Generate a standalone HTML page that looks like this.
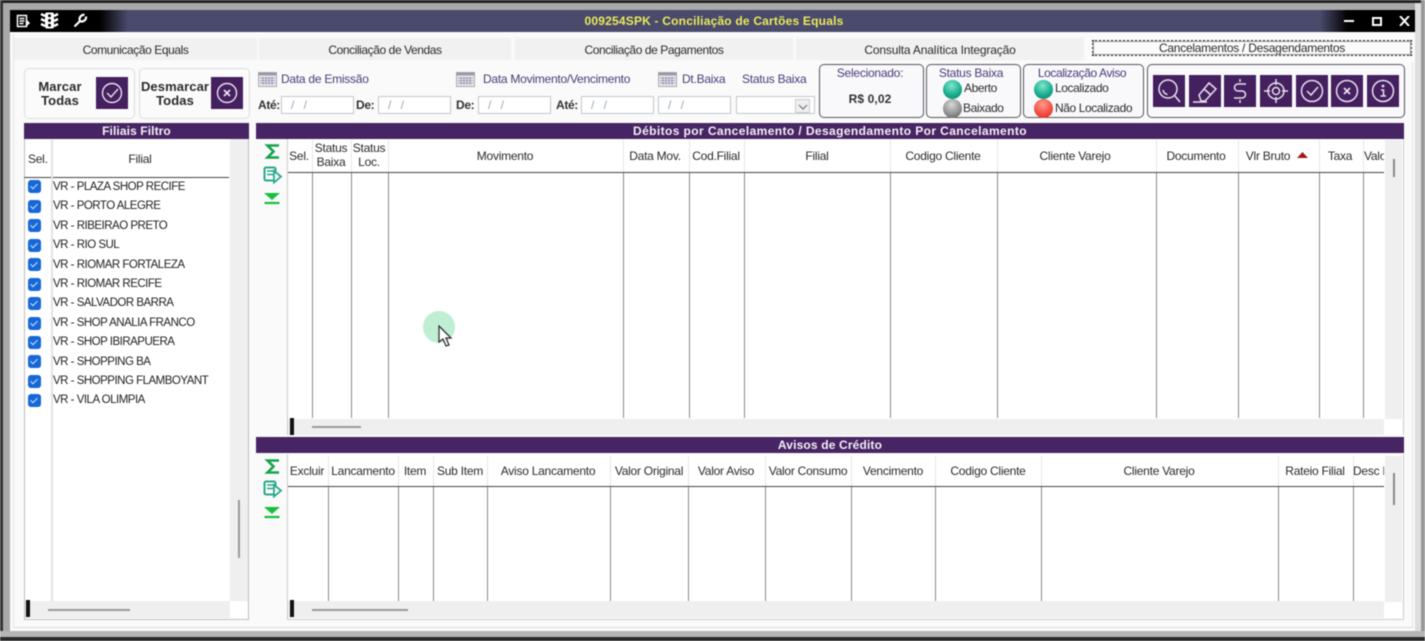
<!DOCTYPE html>
<html lang="pt"><head><meta charset="utf-8"><title>Conciliação de Cartões Equals</title>
<style>
html,body{margin:0;padding:0;background:#f7f7f7}
body{width:1425px;height:641px;overflow:hidden;position:relative;font-family:"Liberation Sans",sans-serif;font-size:12px;letter-spacing:-.25px;color:#2b2b2b;filter:blur(.45px)}
div,span,svg{position:absolute}
.t{white-space:nowrap;text-align:center;transform:translateX(-50%);line-height:14px}
.l{white-space:nowrap;line-height:14px}
.p{color:#4b3a78}
.tab{top:38px;height:22px;background:#f1f1f1;line-height:25px;text-align:center;font-size:12px;letter-spacing:-.42px;color:#2b2b2b}
.bar{background:#472463;color:#f4f0f6;font-weight:bold;text-align:center;height:16px;line-height:16px;font-size:12px;letter-spacing:.1px}
.box{border:1px solid #55555f;border-radius:5px;background:#f9f9fb;box-sizing:border-box}
.btn{border:1px solid #ddd;border-radius:5px;background:#fbfbfb;box-sizing:border-box}
.inp{top:96px;height:18px;width:73px;box-sizing:border-box;border:1px solid #c3c7cc;background:#fff;color:#9aa6b4;font-size:12px;line-height:16px;padding-left:9px;letter-spacing:3px}
.v{width:1px;background:#8a8a8a}
.hl{width:1px;background:#e6e6e6}
.ico{width:32px;height:32px;top:75px;background:#44205f}
.cb{left:28px;width:13px;height:13px;background:#1668d8;border-radius:3px}
.cb:after{content:"";position:absolute;left:4px;top:2px;width:3px;height:6px;border:solid #cfe2fa;border-width:0 1px 1px 0;transform:rotate(45deg)}
.r{left:53px;font-size:11.5px;letter-spacing:-.5px;line-height:14px;white-space:nowrap;color:#222}
.ball{width:19px;height:19px;border-radius:50%}
.g{background:radial-gradient(circle at 45% 30%,#7fe8cd,#14a88a 60%,#0c7f68)}
.k{background:radial-gradient(circle at 45% 30%,#d8d8d8,#8c8c8c 60%,#555)}
.e{background:radial-gradient(circle at 45% 30%,#ff9c8c,#f4483c 60%,#d42a20)}
.lg{letter-spacing:-.4px}
.bl{font-weight:bold;color:#333;letter-spacing:-.35px}
</style></head><body>
<!-- window frame -->
<div style="left:0;top:0;width:1425px;height:3px;background:#222"></div>
<div style="left:0;top:3px;width:1425px;height:7px;background:#a9a9a9"></div>
<div style="left:0;top:0;width:3px;height:641px;background:#333"></div>
<div style="left:3px;top:3px;width:7px;height:634px;background:#a9a9a9"></div>
<div style="left:1415px;top:3px;width:6px;height:634px;background:#dedede"></div>
<div style="left:1421px;top:0;width:4px;height:641px;background:#999"></div>
<div style="left:0;top:631px;width:1425px;height:6px;background:#b5b5b5"></div>
<div style="left:0;top:637px;width:1425px;height:4px;background:#2a2a2a"></div>
<div style="left:10px;top:32px;width:1405px;height:599px;background:#fafafa"></div>
<div style="left:14px;top:627px;width:1398px;height:1px;background:#ddd"></div>
<div style="left:13px;top:34px;width:1px;height:594px;background:#e6e6e6"></div>
<div style="left:1412px;top:34px;width:1px;height:594px;background:#e6e6e6"></div>
<!-- title bar -->
<div style="left:10px;top:10px;width:1405px;height:22px;background:linear-gradient(90deg,#000 0,#000 90px,#4a4a6c 118px,#4a4a6c 1310px,#000 1338px,#000 100%)"></div>
<div class="t" style="left:714px;top:14px;color:#eaea5a;font-weight:bold;font-size:12px;letter-spacing:.2px">009254SPK - Conciliação de Cartões Equals</div>
<svg style="left:14px;top:12px" width="76" height="17" viewBox="0 0 76 17" fill="none" stroke="#fff" stroke-width="1.500"><path d="M3.500 3.500h9v11h-9zM5.500 6.500h5M5.500 9h5M5.500 11.500h4"/><path d="M13 8l3 3-3 3" fill="#fff" stroke="none"/><rect x="31" y="0.500" width="9" height="16" rx="2" fill="#fff" stroke="none"/><path d="M27 2l4 2M27 7l4 2M27 12l4 2M44 2l-4 2M44 7l-4 2M44 12l-4 2" stroke-width="2.400"/><circle cx="35.500" cy="3.800" r="1.500" fill="#000" stroke="none"/><circle cx="35.500" cy="8.500" r="1.500" fill="#000" stroke="none"/><circle cx="35.500" cy="13.200" r="1.500" fill="#000" stroke="none"/><path d="M60.500 14.500L66 9c-1.500-3 1-6.500 4.500-6.200M66 9c3 1.500 6.500-1 6-4.500" stroke-width="2.200"/></svg>
<div style="left:1344px;top:20px;width:10px;height:2px;background:#fff"></div>
<div style="left:1372px;top:17px;width:6px;height:5px;border:2px solid #fff"></div>
<svg style="left:1399px;top:16px" width="11" height="10" viewBox="0 0 11 10"><path d="M1 0l9 10M10 0L1 10" stroke="#fff" stroke-width="2"/></svg>
<!-- tabs -->
<div class="tab" style="left:14px;width:243px">Comunicação Equals</div>
<div class="tab" style="left:259px;width:252px">Conciliação de Vendas</div>
<div class="tab" style="left:515px;width:278px">Conciliação de Pagamentos</div>
<div class="tab" style="left:796px;width:288px;letter-spacing:-.17px">Consulta Analítica Integração</div>
<div style="left:1087px;top:34px;width:328px;height:28px;background:#fbfbfb"></div>
<div style="left:1092px;top:40px;width:320px;height:16px;box-sizing:border-box;border:2px dotted #333;outline:1px solid #999;outline-offset:-2px;text-align:center;line-height:12px;font-size:12px;letter-spacing:-.26px">Cancelamentos / Desagendamentos</div>
<!-- mark buttons -->
<div class="btn" style="left:24px;top:68px;width:111px;height:51px"></div>
<div class="btn" style="left:139px;top:68px;width:111px;height:51px"></div>
<div class="t" style="left:60px;top:80px;font-weight:bold;font-size:13px;letter-spacing:.1px">Marcar</div>
<div class="t" style="left:60px;top:94px;font-weight:bold;font-size:13px;letter-spacing:.1px">Todas</div>
<div class="t" style="left:175px;top:80px;font-weight:bold;font-size:13px;letter-spacing:.1px">Desmarcar</div>
<div class="t" style="left:175px;top:94px;font-weight:bold;font-size:13px;letter-spacing:.1px">Todas</div>
<div class="ico" style="left:96px;top:77px"><svg style="left:0;top:0" width="32" height="32" viewBox="0 0 32 32" fill="none" stroke="#e8e0ee" stroke-width="1.400"><circle cx="16" cy="16" r="9.500"/><path d="M11 16l4 4 7-8"/></svg></div>
<div class="ico" style="left:211px;top:77px"><svg style="left:0;top:0" width="32" height="32" viewBox="0 0 32 32" fill="none" stroke="#e8e0ee" stroke-width="1.400"><circle cx="16" cy="16" r="9.500"/><path d="M13 13l6 6M19 13l-6 6" stroke-width="1.800"/></svg></div>
<!-- filter labels -->
<svg style="left:258px;top:72px" width="19" height="15" viewBox="0 0 19 15"><rect x="0.500" y="0.500" width="18" height="14" fill="#e8e8ee" stroke="#aaa"/><rect x="0.500" y="0.500" width="18" height="3" fill="#9a9aa8"/><path d="M2 6h15M2 8.500h15M2 11h15M5 5v8M8 5v8M11 5v8M14 5v8" stroke="#8c8ca5" stroke-width=".7"/></svg>
<svg style="left:456px;top:72px" width="19" height="15" viewBox="0 0 19 15"><rect x="0.500" y="0.500" width="18" height="14" fill="#e8e8ee" stroke="#aaa"/><rect x="0.500" y="0.500" width="18" height="3" fill="#9a9aa8"/><path d="M2 6h15M2 8.500h15M2 11h15M5 5v8M8 5v8M11 5v8M14 5v8" stroke="#8c8ca5" stroke-width=".7"/></svg>
<svg style="left:658px;top:72px" width="19" height="15" viewBox="0 0 19 15"><rect x="0.500" y="0.500" width="18" height="14" fill="#e8e8ee" stroke="#aaa"/><rect x="0.500" y="0.500" width="18" height="3" fill="#9a9aa8"/><path d="M2 6h15M2 8.500h15M2 11h15M5 5v8M8 5v8M11 5v8M14 5v8" stroke="#8c8ca5" stroke-width=".7"/></svg>
<div class="l p" style="left:281px;top:72px">Data de Emissão</div>
<div class="l p" style="left:483px;top:72px">Data Movimento/Vencimento</div>
<div class="l p" style="left:682px;top:72px">Dt.Baixa</div>
<div class="l p" style="left:742px;top:72px">Status Baixa</div>
<div class="l bl" style="left:258px;top:98px">Até:</div>
<div class="l bl" style="left:356px;top:98px">De:</div>
<div class="l bl" style="left:456px;top:98px">De:</div>
<div class="l bl" style="left:556px;top:98px">Até:</div>
<div class="inp" style="left:281px">/ /</div>
<div class="inp" style="left:378px">/ /</div>
<div class="inp" style="left:478px">/ /</div>
<div class="inp" style="left:581px">/ /</div>
<div class="inp" style="left:658px">/ /</div>
<div class="inp" style="left:736px;width:79px"></div>
<div style="left:795px;top:99px;width:15px;height:14px;background:#eee;border:1px solid #ccc;box-sizing:border-box"></div>
<svg style="left:797px;top:102px" width="12" height="9"><path d="M2 3l4 4 4-4" fill="none" stroke="#667" stroke-width="1"/></svg>
<!-- boxes -->
<div class="box" style="left:819px;top:64px;width:105px;height:54px"></div>
<div class="t p" style="left:870px;top:66px">Selecionado:</div>
<div class="t" style="left:870px;top:92px;font-weight:bold;color:#333;letter-spacing:.1px">R$ 0,02</div>
<div class="box" style="left:926px;top:64px;width:95px;height:54px"></div>
<div class="t p" style="left:971px;top:66px">Status Baixa</div>
<div class="ball g" style="left:943px;top:80px"></div>
<div class="ball k" style="left:943px;top:99px"></div>
<div class="l lg" style="left:964px;top:81px">Aberto</div>
<div class="l lg" style="left:963px;top:101px">Baixado</div>
<div class="box" style="left:1023px;top:64px;width:121px;height:54px"></div>
<div class="t p lg" style="left:1082px;top:66px">Localização Aviso</div>
<div class="ball g" style="left:1034px;top:80px"></div>
<div class="ball e" style="left:1034px;top:99px"></div>
<div class="l lg" style="left:1055px;top:81px">Localizado</div>
<div class="l lg" style="left:1055px;top:101px">Não Localizado</div>
<div class="box" style="left:1147px;top:64px;width:258px;height:54px"></div>
<div class="ico" style="left:1153px"><svg style="left:0;top:0" width="32" height="32" viewBox="0 0 32 32" fill="none" stroke="#e8e0ee" stroke-width="1.500"><circle cx="15" cy="14" r="9"/><path d="M21.500 20.500L27 27M10 15c.5 2.500 2 4 4.500 4.500"/></svg></div>
<div class="ico" style="left:1189px"><svg style="left:0;top:0" width="32" height="32" viewBox="0 0 32 32" fill="none" stroke="#e8e0ee" stroke-width="1.500"><path d="M10 20L20 8l7 6-11 12h-4zM15 14l7 6M4 27h14"/></svg></div>
<div class="ico" style="left:1224px"><svg style="left:0;top:0" width="32" height="32" viewBox="0 0 32 32" fill="none" stroke="#e8e0ee" stroke-width="1.500"><path d="M22 9h-8a3.500 3.500 0 0 0 0 7h4a3.500 3.500 0 0 1 0 7h-8M16 4v3M16 25v3"/></svg></div>
<div class="ico" style="left:1260px"><svg style="left:0;top:0" width="32" height="32" viewBox="0 0 32 32" fill="none" stroke="#e8e0ee" stroke-width="1.500"><circle cx="16" cy="16" r="8"/><circle cx="16" cy="16" r="3.500"/><path d="M16 4v6M16 22v6M4 16h6M22 16h6"/></svg></div>
<div class="ico" style="left:1296px"><svg style="left:0;top:0" width="32" height="32" viewBox="0 0 32 32" fill="none" stroke="#e8e0ee" stroke-width="1.500"><circle cx="16" cy="16" r="10.500"/><path d="M11 16l4 4 7-8"/></svg></div>
<div class="ico" style="left:1331px"><svg style="left:0;top:0" width="32" height="32" viewBox="0 0 32 32" fill="none" stroke="#e8e0ee" stroke-width="1.500"><circle cx="16" cy="16" r="10.500"/><path d="M13 13l6 6M19 13l-6 6" stroke-width="1.800"/></svg></div>
<div class="ico" style="left:1367px"><svg style="left:0;top:0" width="32" height="32" viewBox="0 0 32 32" fill="none" stroke="#e8e0ee" stroke-width="1.500"><circle cx="16" cy="16" r="10.500"/><path d="M14 15h2.500v6M13.500 21h5.500" stroke-width="1.500"/><circle cx="16" cy="11" r="1.400" fill="#e8e0ee" stroke="none"/></svg></div>
<!-- left panel -->
<div style="left:24px;top:123px;width:225px;height:497px;background:#fff;border:1px solid #bdbdbd;border-top:0;box-sizing:border-box"></div>
<div class="bar" style="left:24px;top:123px;width:225px">Filiais Filtro</div>
<div class="l" style="left:28px;top:152px">Sel.</div>
<div class="t" style="left:140px;top:152px">Filial</div>
<div style="left:24px;top:177px;width:205px;height:1px;background:#444"></div>
<div style="left:51px;top:140px;width:2px;height:461px;background:#e2e2e2"></div>
<div style="left:230px;top:139px;width:18px;height:462px;background:#efefef"></div>
<div style="left:238px;top:500px;width:2px;height:58px;background:#999"></div>
<div style="left:25px;top:601px;width:205px;height:17px;background:#efefef"></div>
<div style="left:26px;top:600px;width:4px;height:17px;background:#111"></div>
<div style="left:48px;top:609px;width:82px;height:2px;background:#999"></div>
<div class="cb" style="top:180px"></div><div class="r" style="top:180px">VR - PLAZA SHOP RECIFE</div>
<div class="cb" style="top:200px"></div><div class="r" style="top:199px">VR - PORTO ALEGRE</div>
<div class="cb" style="top:219px"></div><div class="r" style="top:219px">VR - RIBEIRAO PRETO</div>
<div class="cb" style="top:239px"></div><div class="r" style="top:238px">VR - RIO SUL</div>
<div class="cb" style="top:258px"></div><div class="r" style="top:258px">VR - RIOMAR FORTALEZA</div>
<div class="cb" style="top:278px"></div><div class="r" style="top:277px">VR - RIOMAR RECIFE</div>
<div class="cb" style="top:297px"></div><div class="r" style="top:296px">VR - SALVADOR BARRA</div>
<div class="cb" style="top:317px"></div><div class="r" style="top:316px">VR - SHOP ANALIA FRANCO</div>
<div class="cb" style="top:336px"></div><div class="r" style="top:335px">VR - SHOP IBIRAPUERA</div>
<div class="cb" style="top:355px"></div><div class="r" style="top:355px">VR - SHOPPING BA</div>
<div class="cb" style="top:375px"></div><div class="r" style="top:374px">VR - SHOPPING FLAMBOYANT</div>
<div class="cb" style="top:394px"></div><div class="r" style="top:393px">VR - VILA OLIMPIA</div>
<!-- upper grid -->
<div class="bar" style="left:256px;top:123px;width:1148px;letter-spacing:.4px">Débitos por Cancelamento / Desagendamento Por Cancelamento</div>
<div style="left:287px;top:139px;width:1117px;height:296px;background:#fff;border-left:1px solid #ccc;border-right:1px solid #ccc;box-sizing:border-box"></div>
<div style="left:288px;top:172px;width:1096px;height:1px;background:#444"></div>
<div class="hl" style="left:312px;top:140px;height:32px"></div><div class="hl" style="left:351px;top:140px;height:32px"></div><div class="hl" style="left:388px;top:140px;height:32px"></div><div class="hl" style="left:623px;top:140px;height:32px"></div><div class="hl" style="left:689px;top:140px;height:32px"></div><div class="hl" style="left:744px;top:140px;height:32px"></div><div class="hl" style="left:890px;top:140px;height:32px"></div><div class="hl" style="left:997px;top:140px;height:32px"></div><div class="hl" style="left:1156px;top:140px;height:32px"></div><div class="hl" style="left:1238px;top:140px;height:32px"></div><div class="hl" style="left:1319px;top:140px;height:32px"></div><div class="hl" style="left:1363px;top:140px;height:32px"></div>
<div class="v" style="left:312px;top:173px;height:245px"></div><div class="v" style="left:351px;top:173px;height:245px"></div><div class="v" style="left:388px;top:173px;height:245px"></div><div class="v" style="left:623px;top:173px;height:245px"></div><div class="v" style="left:689px;top:173px;height:245px"></div><div class="v" style="left:744px;top:173px;height:245px"></div><div class="v" style="left:890px;top:173px;height:245px"></div><div class="v" style="left:997px;top:173px;height:245px"></div><div class="v" style="left:1156px;top:173px;height:245px"></div><div class="v" style="left:1238px;top:173px;height:245px"></div><div class="v" style="left:1319px;top:173px;height:245px"></div><div class="v" style="left:1363px;top:173px;height:245px"></div>
<div class="t" style="left:299px;top:149px">Sel.</div>
<div class="t" style="left:331px;top:141px">Status</div><div class="t" style="left:331px;top:155px">Baixa</div>
<div class="t" style="left:369px;top:141px">Status</div><div class="t" style="left:369px;top:155px">Loc.</div>
<div class="t" style="left:505px;top:149px">Movimento</div>
<div class="t" style="left:655px;top:149px">Data Mov.</div>
<div class="t" style="left:716px;top:149px">Cod.Filial</div>
<div class="t" style="left:817px;top:149px">Filial</div>
<div class="t" style="left:943px;top:149px">Codigo Cliente</div>
<div class="t" style="left:1075px;top:149px">Cliente Varejo</div>
<div class="t" style="left:1196px;top:149px">Documento</div>
<div class="t" style="left:1268px;top:149px">Vlr Bruto</div>
<svg style="left:1297px;top:152px" width="11" height="6"><path d="M0 6L5.500 0 11 6z" fill="#a01818"/></svg>
<div class="t" style="left:1340px;top:149px">Taxa</div>
<div class="l" style="left:1364px;top:149px;width:20px;overflow:hidden">Valor</div>
<div style="left:1385px;top:140px;width:17px;height:279px;background:#efefef"></div>
<div style="left:1393px;top:159px;width:2px;height:18px;background:#888"></div>
<div style="left:288px;top:419px;width:1096px;height:16px;background:#efefef"></div>
<div style="left:290px;top:418px;width:4px;height:17px;background:#111"></div>
<div style="left:312px;top:426px;width:49px;height:2px;background:#999"></div>
<svg style="left:263px;top:143px" width="20" height="65" viewBox="0 0 20 65" fill="none"><path d="M16 2.500H4.500l6 6-6 6H16" stroke="#16a34a" stroke-width="2.600"/><rect x="1.500" y="24.500" width="11" height="13" rx="1.500" stroke="#2aa88a" stroke-width="2"/><path d="M4 28h7M4 31.500h7" stroke="#2aa88a" stroke-width="1.600"/><path d="M11 28l7 5.500-7 6z" fill="#fff" stroke="#2aa88a" stroke-width="1.800"/><path d="M1 50h16l-8 7z" fill="#14c03c"/><path d="M1.500 60h15" stroke="#14c03c" stroke-width="2.200"/></svg>
<!-- lower grid -->
<div class="bar" style="left:256px;top:437px;width:1148px;letter-spacing:.15px">Avisos de Crédito</div>
<div style="left:287px;top:454px;width:1117px;height:166px;background:#fff;border:1px solid #ccc;border-top:0;box-sizing:border-box"></div>
<div style="left:288px;top:486px;width:1096px;height:1px;background:#444"></div>
<div class="hl" style="left:328px;top:456px;height:30px"></div><div class="hl" style="left:398px;top:456px;height:30px"></div><div class="hl" style="left:433px;top:456px;height:30px"></div><div class="hl" style="left:487px;top:456px;height:30px"></div><div class="hl" style="left:610px;top:456px;height:30px"></div><div class="hl" style="left:688px;top:456px;height:30px"></div><div class="hl" style="left:765px;top:456px;height:30px"></div><div class="hl" style="left:851px;top:456px;height:30px"></div><div class="hl" style="left:935px;top:456px;height:30px"></div><div class="hl" style="left:1041px;top:456px;height:30px"></div><div class="hl" style="left:1278px;top:456px;height:30px"></div><div class="hl" style="left:1353px;top:456px;height:30px"></div>
<div class="v" style="left:328px;top:487px;height:114px"></div><div class="v" style="left:398px;top:487px;height:114px"></div><div class="v" style="left:433px;top:487px;height:114px"></div><div class="v" style="left:487px;top:487px;height:114px"></div><div class="v" style="left:610px;top:487px;height:114px"></div><div class="v" style="left:688px;top:487px;height:114px"></div><div class="v" style="left:765px;top:487px;height:114px"></div><div class="v" style="left:851px;top:487px;height:114px"></div><div class="v" style="left:935px;top:487px;height:114px"></div><div class="v" style="left:1041px;top:487px;height:114px"></div><div class="v" style="left:1278px;top:487px;height:114px"></div><div class="v" style="left:1353px;top:487px;height:114px"></div>
<div class="t" style="left:307px;top:464px">Excluir</div>
<div class="t" style="left:363px;top:464px">Lancamento</div>
<div class="t" style="left:415px;top:464px">Item</div>
<div class="t" style="left:460px;top:464px">Sub Item</div>
<div class="t" style="left:548px;top:464px">Aviso Lancamento</div>
<div class="t" style="left:649px;top:464px">Valor Original</div>
<div class="t" style="left:726px;top:464px">Valor Aviso</div>
<div class="t" style="left:808px;top:464px">Valor Consumo</div>
<div class="t" style="left:893px;top:464px">Vencimento</div>
<div class="t" style="left:988px;top:464px">Codigo Cliente</div>
<div class="t" style="left:1159px;top:464px">Cliente Varejo</div>
<div class="t" style="left:1315px;top:464px">Rateio Filial</div>
<div class="l" style="left:1353px;top:464px;width:31px;overflow:hidden">Desc Filial</div>
<div style="left:1385px;top:456px;width:17px;height:146px;background:#efefef"></div>
<div style="left:1393px;top:473px;width:2px;height:32px;background:#888"></div>
<div style="left:288px;top:601px;width:1096px;height:17px;background:#efefef"></div>
<div style="left:290px;top:600px;width:4px;height:17px;background:#111"></div>
<div style="left:312px;top:609px;width:96px;height:2px;background:#999"></div>
<svg style="left:263px;top:458px" width="20" height="65" viewBox="0 0 20 65" fill="none"><path d="M16 2.500H4.500l6 6-6 6H16" stroke="#16a34a" stroke-width="2.600"/><rect x="1.500" y="23.500" width="11" height="13" rx="1.500" stroke="#2aa88a" stroke-width="2"/><path d="M4 27h7M4 30.500h7" stroke="#2aa88a" stroke-width="1.600"/><path d="M11 27l7 5.500-7 6z" fill="#fff" stroke="#2aa88a" stroke-width="1.800"/><path d="M1 49h16l-8 7z" fill="#14c03c"/><path d="M1.500 59h15" stroke="#14c03c" stroke-width="2.200"/></svg>
<!-- cursor -->
<div style="left:423px;top:311px;width:32px;height:32px;border-radius:50%;background:#bfeed5"></div>
<svg style="left:437px;top:325px" width="17" height="23" viewBox="0 0 17 23"><path d="M2 1v16l4-3 3 7 3-1-3-7h5z" fill="#fff" stroke="#333" stroke-width="1.300"/></svg>
</body></html>
